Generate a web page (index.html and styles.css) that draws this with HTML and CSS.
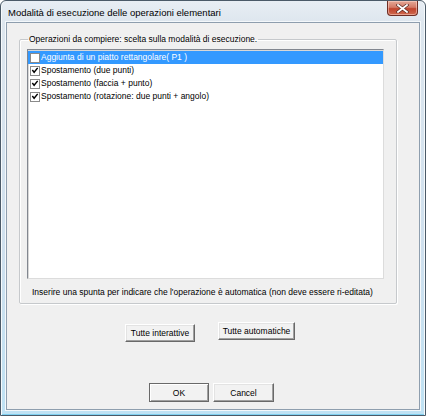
FILE: index.html
```html
<!DOCTYPE html>
<html lang="it">
<head>
<meta charset="utf-8">
<title>Modalità di esecuzione delle operazioni elementari</title>
<link rel="stylesheet" href="styles.css">
</head>
<body>
<div class="window">
  <div class="titlebar">
    <span class="title">Modalità di esecuzione delle operazioni elementari</span>
    <button class="close" type="button" aria-label="Chiudi">
      <svg width="13" height="9" viewBox="0 0 13 9">
        <path d="M2 1 L11 8 M11 1 L2 8" stroke="#5a2a22" stroke-width="3.2" stroke-linecap="square"/>
        <path d="M2 1 L11 8 M11 1 L2 8" stroke="#ffffff" stroke-width="1.8" stroke-linecap="square"/>
      </svg>
    </button>
  </div>
  <div class="client">
    <fieldset class="group">
      <legend class="group-label">Operazioni da compiere: scelta sulla modalità di esecuzione.</legend>
      <ul class="list">
        <li class="item selected"><span class="check"></span><span class="label">Aggiunta di un piatto rettangolare( P1 )</span></li>
        <li class="item"><span class="check checked"><svg width="9" height="9" viewBox="0 0 9 9"><path d="M1.5 4 L3.5 6.5 L7.5 1.5" fill="none" stroke="#000" stroke-width="1.6"/></svg></span><span class="label">Spostamento (due punti)</span></li>
        <li class="item"><span class="check checked"><svg width="9" height="9" viewBox="0 0 9 9"><path d="M1.5 4 L3.5 6.5 L7.5 1.5" fill="none" stroke="#000" stroke-width="1.6"/></svg></span><span class="label">Spostamento (faccia + punto)</span></li>
        <li class="item"><span class="check checked"><svg width="9" height="9" viewBox="0 0 9 9"><path d="M1.5 4 L3.5 6.5 L7.5 1.5" fill="none" stroke="#000" stroke-width="1.6"/></svg></span><span class="label">Spostamento (rotazione: due punti + angolo)</span></li>
      </ul>
      <p class="hint">Inserire una spunta per indicare che l'operazione è automatica (non deve essere ri-editata)</p>
    </fieldset>
    <div class="mode-buttons">
      <button class="btn btn-interactive" type="button">Tutte interattive</button>
      <button class="btn btn-auto" type="button">Tutte automatiche</button>
    </div>
    <div class="dialog-buttons">
      <button class="btn btn-ok" type="button">OK</button>
      <button class="btn btn-cancel" type="button">Cancel</button>
    </div>
  </div>
</div>
</body>
</html>
```

FILE: styles.css
```css
* {
  box-sizing: border-box;
}

html, body {
  margin: 0;
  padding: 0;
  background: #ffffff;
}

body {
  font-family: "Liberation Sans", Arial, sans-serif;
  font-size: 8.5px;
  color: #000000;
}

/* Window frame (glass style) */
.window {
  width: 426px;
  height: 416px;
  display: flex;
  flex-direction: column;
  border: 1px solid #4b5a68;
  border-radius: 6px 6px 0 0;
  padding: 0 5px 5px 5px;
  background: linear-gradient(to bottom, #e8eef4 0px, #dde6ee 22px, #cfe0ee 60%, #bfe2f4 100%);
  box-shadow: inset 1px 0 0 #f6fafc, inset -1px 0 0 #f6fafc, inset 0 -1px 0 #7fd0f0;
}

.titlebar {
  height: 21px;
  display: flex;
  align-items: flex-start;
  justify-content: space-between;
}

.title {
  font-size: 9.5px;
  padding-left: 2px;
  padding-top: 6px;
  color: #000000;
}

.close {
  width: 31px;
  height: 15px;
  margin: 0 2px 0 0;
  padding: 0;
  border: 1px solid #6e2d24;
  border-top: none;
  border-radius: 0 0 4px 4px;
  background: linear-gradient(to bottom, #e4a897 0%, #d47a66 45%, #c0432c 55%, #cf6a50 100%);
  box-shadow: inset 0 0 0 1px rgba(255, 220, 210, 0.5);
  display: flex;
  align-items: center;
  justify-content: center;
}

/* Client area */
.client {
  flex: 1;
  display: flex;
  flex-direction: column;
  background: #f0f0f0;
  border: 1px solid #8e9eae;
  box-shadow: 0 0 0 1px #f4f8fb;
  padding: 0 0 0 12px;
}

.group {
  margin: 10px 0 0 0;
  padding: 4px 12px 0 7px;
  width: 378px;
  height: 271px;
  border: 1px solid #c6c9cc;
  border-radius: 2px;
  box-shadow: inset 1px 1px 0 #ffffff, 1px 1px 0 #ffffff;
  display: flex;
  flex-direction: column;
}

.group-label {
  padding: 0 1px;
  margin-left: 1px;
  line-height: 12px;
}

.list {
  list-style: none;
  margin: 0;
  padding: 1px 0 0 0;
  width: 357px;
  height: 230px;
  background: #ffffff;
  border: 1px solid #dcdcdc;
  border-top-color: #828790;
  border-left-color: #828790;
  box-shadow: inset 1px 1px 0 #d7d7d7;
}

.item {
  height: 13px;
  display: flex;
  align-items: center;
  padding-left: 2px;
  line-height: 13px;
}

.item.selected {
  background: #3399ff;
  color: #ffffff;
}

.check {
  width: 10px;
  height: 10px;
  flex: none;
  background: #ffffff;
  border: 1px solid #8a8a8a;
  margin-right: 1px;
  display: flex;
  align-items: center;
  justify-content: center;
}

.check svg {
  display: block;
}

.hint {
  margin: 7px 0 0 5px;
  line-height: 12px;
}

/* Push buttons */
.btn {
  font-family: "Liberation Sans", Arial, sans-serif;
  font-size: 8.5px;
  color: #000000;
  padding: 0;
  background: #f2f2f2;
  border: 1px solid;
  border-color: #ffffff #696969 #696969 #ffffff;
  box-shadow: inset -1px -1px 0 #a0a0a0, inset 1px 1px 0 #e3e3e3;
  border-radius: 0;
}

.mode-buttons {
  display: flex;
  align-items: flex-start;
  gap: 23px;
  margin: 18px 0 0 106px;
}

.btn-interactive {
  width: 70px;
  height: 18px;
  margin-top: 2px;
}

.btn-auto {
  width: 77px;
  height: 18px;
}

.dialog-buttons {
  display: flex;
  gap: 4px;
  margin: 41px 0 0 130px;
}

.btn-ok {
  width: 60px;
  height: 19px;
  border-color: #696969;
  box-shadow: inset 1px 1px 0 #ffffff, inset -1px -1px 0 #a0a0a0;
}

.btn-cancel {
  width: 61px;
  height: 19px;
}
```
